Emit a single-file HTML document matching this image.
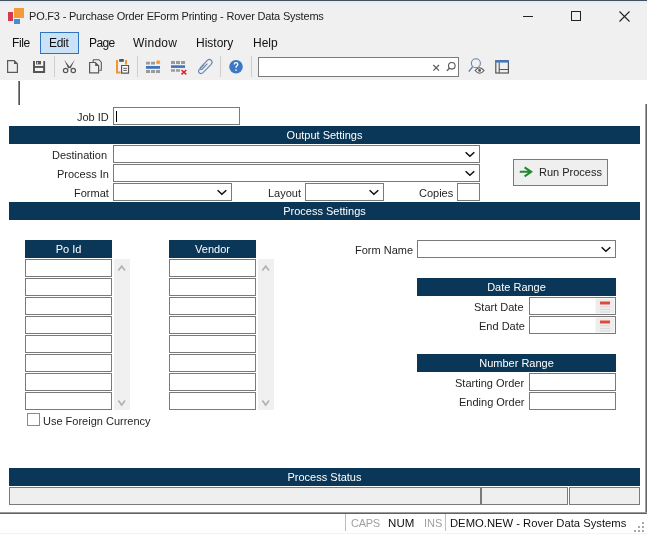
<!DOCTYPE html>
<html><head><meta charset="utf-8">
<style>
*{margin:0;padding:0;box-sizing:border-box}
html,body{width:647px;height:534px;overflow:hidden;background:#fff;font-family:"Liberation Sans",sans-serif;position:relative;-webkit-font-smoothing:antialiased}
.a{position:absolute}
.t{position:absolute;white-space:nowrap;line-height:1;will-change:transform}
#chrome{left:0;top:0;width:647px;height:80px;background:#f0f0f0}
.menu{font-size:12px;color:#111;top:37px}
.lbl{font-size:11px;color:#1f1f1f;text-align:right}
.band{background:#0a3657;color:#fff;font-size:11px;text-align:center;line-height:18px;height:18px;will-change:transform}
.box{border:1px solid #7a7a7a;background:#fff}
.sep{width:1px;background:#c8c8c8}
.chev{position:absolute;width:6px;height:6px;border-right:1.6px solid #222;border-bottom:1.6px solid #222;transform:rotate(45deg)}
.sb{background:#f0f0f0}
.sbch{position:absolute;width:5px;height:5px;border-left:1.3px solid #a8a8a8;border-top:1.3px solid #a8a8a8}
</style></head><body>
<div id="chrome" class="a"></div>
<!-- title bar -->
<div class="a" style="left:0;top:0;width:647px;height:1px;background:#44505e"></div>
<div class="a" style="left:0;top:1px;width:647px;height:2px;background:#e6ecf3"></div>
<div class="a" style="left:8px;top:12px;width:5px;height:9px;background:#d33b4c"></div>
<div class="a" style="left:14px;top:8px;width:10px;height:10px;background:#f39a3b"></div>
<div class="a" style="left:14px;top:19px;width:6px;height:5px;background:#4a8ad8"></div>
<div class="t" style="left:29px;top:11px;font-size:11px;color:#222;letter-spacing:-0.2px">PO.F3 - Purchase Order EForm Printing - Rover Data Systems</div>
<div class="a" style="left:523px;top:16px;width:10px;height:1px;background:#222"></div>
<div class="a" style="left:571px;top:11px;width:10px;height:10px;border:1px solid #222"></div>
<svg class="a" style="left:618px;top:10px" width="13" height="13" viewBox="0 0 13 13"><path d="M1.5 1.5L11.5 11.5M11.5 1.5L1.5 11.5" stroke="#222" stroke-width="1.1"/></svg>

<!-- menu -->
<div class="a" style="left:40px;top:32px;width:39px;height:22px;background:#c9e2f8;border:1px solid #2f74bf"></div>
<div class="t menu" style="left:12px;letter-spacing:-0.4px">File</div>
<div class="t menu" style="left:49px;letter-spacing:-0.3px">Edit</div>
<div class="t menu" style="left:89px;letter-spacing:-0.6px">Page</div>
<div class="t menu" style="left:133px;letter-spacing:0.25px">Window</div>
<div class="t menu" style="left:196px">History</div>
<div class="t menu" style="left:253px">Help</div>

<!-- toolbar -->
<svg class="a" style="left:0;top:0" width="647" height="80" viewBox="0 0 647 80">
<g fill="none" stroke-linejoin="miter">
<!-- new doc -->
<path d="M7.6 60.6H14.2L17.4 63.8V72.4H7.6Z" stroke="#5a5a5a" stroke-width="1.2"/>
<path d="M14 60.5V64H17.5Z" fill="#5a5a5a" stroke="none"/>
<!-- save -->
<path d="M33 61H45.1V73H33Z" fill="#555" stroke="none"/>
<path d="M35 61H43.3V66H35Z" fill="#f4f4f4" stroke="none"/>
<path d="M36 61H41V64.4H36Z" fill="#555" stroke="none"/>
<path d="M36.9 62.2H38.1V63.7H36.9Z" fill="#f4f4f4" stroke="none"/>
<path d="M35 67.9H43.1V71H35Z" fill="#f4f4f4" stroke="none"/>
<!-- sep -->
<path d="M54.5 56V77" stroke="#cfcfcf" stroke-width="1"/>
<!-- scissors -->
<path d="M64.2 59.8L70.2 67.4L68.2 68.6Z" fill="#555" stroke="none"/>
<path d="M74.8 59.8L69 67.4L70.6 68.4Z" fill="#555" stroke="none"/>
<circle cx="65.6" cy="70.5" r="2.2" stroke="#555" stroke-width="1.2"/>
<circle cx="73.3" cy="70.5" r="2.2" stroke="#555" stroke-width="1.2"/>
<!-- copy -->
<path d="M93.2 59.7H98.8L101.3 62.2V70.2H99.2" stroke="#5a5a5a" stroke-width="1.1"/>
<path d="M93.2 59.7V62" stroke="#5a5a5a" stroke-width="1.1"/>
<path d="M89.6 62.5H95.4L98.6 65.7V72.9H89.6Z" stroke="#5a5a5a" stroke-width="1.2"/>
<path d="M95.2 62.4V65.9H98.7Z" fill="#5a5a5a" stroke="none"/>
<!-- paste -->
<path d="M117 60V72.5H120.6" stroke="#ef9536" stroke-width="2"/>
<path d="M126 60V64.5" stroke="#ef9536" stroke-width="2"/>
<path d="M119.2 59H123.8V61.8H119.2Z" fill="#555" stroke="none"/>
<path d="M121.6 65.5H128.5V73.1H121.6Z" fill="#fff" stroke="#555" stroke-width="1.2"/>
<path d="M123.3 68.3H126.9M123.3 70.4H126.9" stroke="#555" stroke-width="1"/>
<!-- sep -->
<path d="M137.5 56V77" stroke="#cfcfcf" stroke-width="1"/>
<!-- insert row -->
<path d="M146 61.8H150V64.5H146ZM151 61.8H155V64.5H151Z" fill="#9a9a9a" stroke="none"/>
<circle cx="158.2" cy="62.2" r="2" fill="#f29a3a" stroke="none"/>
<path d="M146 66H160V68.8H146Z" fill="#3d75bd" stroke="none"/>
<path d="M146 70H150V73H146ZM151 70H155V73H151ZM156 70H160V73H156Z" fill="#9a9a9a" stroke="none"/>
<!-- delete row -->
<path d="M171 61.1H175V63.9H171ZM176 61.1H180V63.9H176ZM181 61.1H185V63.9H181Z" fill="#9a9a9a" stroke="none"/>
<path d="M171 65.3H185V67.9H171Z" fill="#3d75bd" stroke="none"/>
<path d="M171 69.2H175V71.8H171ZM176 69.2H180V71.8H176Z" fill="#9a9a9a" stroke="none"/>
<path d="M181.5 70L186.3 74.3M186.3 70L181.5 74.3" stroke="#d9262f" stroke-width="1.6"/>
<!-- paperclip -->
<path d="M204.2 64.3L199.3 69.4Q197.6 71.5 199.5 73Q201.3 74.2 203 72.6L210.9 64.6Q213.2 62 211.2 60.2Q209.2 58.6 207.1 60.6L200.6 67.4Q199.7 68.6 200.5 69.3Q201.3 70 202.3 69L207.4 63.7" stroke="#6b86ad" stroke-width="1.2"/>
<!-- sep -->
<path d="M220.5 56V77" stroke="#cfcfcf" stroke-width="1"/>
<!-- help -->
<circle cx="236" cy="66.7" r="6.8" fill="#3b78c3" stroke="none"/>
<path d="M234.2 64.4Q234.2 62.6 236 62.6Q237.8 62.6 237.8 64.3Q237.8 65.3 236.8 65.9Q236 66.4 236 67.8" stroke="#fff" stroke-width="1.3"/>
<circle cx="236" cy="70" r="0.85" fill="#fff" stroke="none"/>
<!-- sep -->
<path d="M251.5 56V77" stroke="#cfcfcf" stroke-width="1"/>
<!-- search box -->
<rect x="258.5" y="57.5" width="200" height="19" fill="#fff" stroke="#7a7a7a" stroke-width="1"/>
<path d="M433.3 65L439 70.6M439 65L433.3 70.6" stroke="#555" stroke-width="1.1"/>
<circle cx="451.8" cy="65.8" r="3.3" stroke="#555" stroke-width="1.1"/>
<path d="M449.4 68.3L446.8 70.9" stroke="#555" stroke-width="1.3"/>
<!-- preview -->
<circle cx="475.9" cy="63.3" r="4.5" stroke="#6384b0" stroke-width="1.1"/>
<path d="M472.7 66.6L468.8 71.6" stroke="#6384b0" stroke-width="1.5"/>
<path d="M475.1 70.5Q479.6 65 484.1 70.5Q479.6 76 475.1 70.5Z" fill="#f0f0f0" stroke="#555" stroke-width="1.1"/>
<circle cx="479.6" cy="70.4" r="1.4" fill="#555" stroke="none"/>
<!-- layout -->
<rect x="495.8" y="60.8" width="12.6" height="12.2" stroke="#555" stroke-width="1.2"/>
<path d="M495.2 60.2H509V62.6H495.2Z" fill="#3f78c0" stroke="none"/>
<path d="M499.2 62.5V73M499.2 69.5H508.4" stroke="#555" stroke-width="1.1"/>
</g>
</svg>

<!-- content -->
<div class="a" style="left:18px;top:81px;width:1px;height:24px;background:#8a8a8a"></div><div class="a" style="left:19px;top:81px;width:1px;height:24px;background:#555"></div>
<div class="a" style="left:645px;top:104px;width:1px;height:409px;background:#a2a2a2"></div><div class="a" style="left:646px;top:104px;width:1px;height:409px;background:#646464"></div>

<div class="t lbl" style="left:77px;top:112px">Job ID</div>
<div class="a box" style="left:113px;top:107px;width:127px;height:18px"></div>
<div class="a" style="left:116px;top:111px;width:1px;height:11px;background:#000"></div>

<div class="a band" style="left:9px;top:126px;width:631px">Output Settings</div>

<div class="t lbl" style="left:52px;top:150px">Destination</div>
<div class="a box" style="left:113px;top:145px;width:367px;height:18px"></div>
<div class="t lbl" style="left:57px;top:169px">Process In</div>
<div class="a box" style="left:113px;top:164px;width:367px;height:18px"></div>
<div class="t lbl" style="left:74px;top:188px">Format</div>
<div class="a box" style="left:113px;top:183px;width:119px;height:18px"></div>
<div class="t lbl" style="left:268px;top:188px">Layout</div>
<div class="a box" style="left:305px;top:183px;width:79px;height:18px"></div>
<div class="t lbl" style="left:419px;top:188px">Copies</div>
<div class="a box" style="left:457px;top:183px;width:23px;height:18px"></div>

<div class="a" style="left:513px;top:159px;width:95px;height:27px;background:#efefef;border:1px solid #7a7a7a"></div>
<div class="t" style="left:539px;top:167px;font-size:11px;color:#222">Run Process</div>

<div class="a band" style="left:9px;top:202px;width:631px">Process Settings</div>

<div class="a band" style="left:25px;top:240px;width:87px">Po Id</div>
<div class="a band" style="left:169px;top:240px;width:87px">Vendor</div>
<div class="a box" style="left:25px;top:259px;width:87px;height:18px"></div>
<div class="a box" style="left:25px;top:278px;width:87px;height:18px"></div>
<div class="a box" style="left:25px;top:297px;width:87px;height:18px"></div>
<div class="a box" style="left:25px;top:316px;width:87px;height:18px"></div>
<div class="a box" style="left:25px;top:335px;width:87px;height:18px"></div>
<div class="a box" style="left:25px;top:354px;width:87px;height:18px"></div>
<div class="a box" style="left:25px;top:373px;width:87px;height:18px"></div>
<div class="a box" style="left:25px;top:392px;width:87px;height:18px"></div>
<div class="a sb" style="left:114px;top:259px;width:16px;height:151px"></div>
<div class="a box" style="left:169px;top:259px;width:87px;height:18px"></div>
<div class="a box" style="left:169px;top:278px;width:87px;height:18px"></div>
<div class="a box" style="left:169px;top:297px;width:87px;height:18px"></div>
<div class="a box" style="left:169px;top:316px;width:87px;height:18px"></div>
<div class="a box" style="left:169px;top:335px;width:87px;height:18px"></div>
<div class="a box" style="left:169px;top:354px;width:87px;height:18px"></div>
<div class="a box" style="left:169px;top:373px;width:87px;height:18px"></div>
<div class="a box" style="left:169px;top:392px;width:87px;height:18px"></div>
<div class="a sb" style="left:258px;top:259px;width:16px;height:151px"></div>

<div class="t lbl" style="left:355px;top:245px">Form Name</div>
<div class="a box" style="left:417px;top:240px;width:199px;height:18px"></div>

<div class="a band" style="left:417px;top:278px;width:199px">Date Range</div>
<div class="t lbl" style="left:474px;top:302px">Start Date</div>
<div class="a box" style="left:529px;top:297px;width:87px;height:18px"></div>
<div class="t lbl" style="left:479px;top:321px">End Date</div>
<div class="a box" style="left:529px;top:316px;width:87px;height:18px"></div>

<div class="a band" style="left:417px;top:354px;width:199px">Number Range</div>
<div class="t lbl" style="left:455px;top:378px">Starting Order</div>
<div class="a box" style="left:529px;top:373px;width:87px;height:18px"></div>
<div class="t lbl" style="left:459px;top:397px">Ending Order</div>
<div class="a box" style="left:529px;top:392px;width:87px;height:18px"></div>

<div class="a" style="left:27px;top:413px;width:13px;height:13px;border:1px solid #8a8a8a;background:#fff"></div>
<div class="t lbl" style="left:43px;top:416px">Use Foreign Currency</div>

<div class="a band" style="left:9px;top:468px;width:631px">Process Status</div>
<div class="a" style="left:9px;top:487px;width:472px;height:18px;background:#efefef;border:1px solid #7a7a7a"></div>
<div class="a" style="left:481px;top:487px;width:87px;height:18px;background:#efefef;border:1px solid #7a7a7a"></div>
<div class="a" style="left:569px;top:487px;width:71px;height:18px;background:#efefef;border:1px solid #7a7a7a"></div>

<svg class="a" style="left:465px;top:151px" width="10" height="7" viewBox="0 0 10 7"><path d="M0.6 1.2L4.9 5.3L9.3 1.2" fill="none" stroke="#111" stroke-width="1.5"/></svg>
<svg class="a" style="left:465px;top:170px" width="10" height="7" viewBox="0 0 10 7"><path d="M0.6 1.2L4.9 5.3L9.3 1.2" fill="none" stroke="#111" stroke-width="1.5"/></svg>
<svg class="a" style="left:217px;top:189px" width="10" height="7" viewBox="0 0 10 7"><path d="M0.6 1.2L4.9 5.3L9.3 1.2" fill="none" stroke="#111" stroke-width="1.5"/></svg>
<svg class="a" style="left:369px;top:189px" width="10" height="7" viewBox="0 0 10 7"><path d="M0.6 1.2L4.9 5.3L9.3 1.2" fill="none" stroke="#111" stroke-width="1.5"/></svg>
<svg class="a" style="left:601px;top:246px" width="10" height="7" viewBox="0 0 10 7"><path d="M0.6 1.2L4.9 5.3L9.3 1.2" fill="none" stroke="#111" stroke-width="1.5"/></svg>
<svg class="a" style="left:518px;top:166px" width="16" height="12" viewBox="0 0 16 12"><path d="M1.8 5.8H13.2M6.6 1.3L13.2 5.8L6.6 10.3" fill="none" stroke="#1f8a2e" stroke-width="2"/></svg>
<svg class="a" style="left:114px;top:263px" width="16" height="10" viewBox="0 0 16 10"><path d="M4.4 7.6L7.7 3.2L11 7.6" fill="none" stroke="#b2b2b2" stroke-width="1.7"/></svg>
<svg class="a" style="left:114px;top:398px" width="16" height="10" viewBox="0 0 16 10"><path d="M4.4 2.6L7.7 7L11 2.6" fill="none" stroke="#b2b2b2" stroke-width="1.7"/></svg>
<svg class="a" style="left:258px;top:263px" width="16" height="10" viewBox="0 0 16 10"><path d="M4.4 7.6L7.7 3.2L11 7.6" fill="none" stroke="#b2b2b2" stroke-width="1.7"/></svg>
<svg class="a" style="left:258px;top:398px" width="16" height="10" viewBox="0 0 16 10"><path d="M4.4 2.6L7.7 7L11 2.6" fill="none" stroke="#b2b2b2" stroke-width="1.7"/></svg>
<svg class="a" style="left:595px;top:298px" width="20" height="16" viewBox="0 0 20 16"><rect x="0.5" y="0.5" width="19" height="15" fill="#ededed"/><path d="M5 3.5H15V6.5H5Z" fill="#e0483a"/><path d="M5 8.6H15M5 11.4H15M5 14H15" stroke="#d8d8d8" stroke-width="1"/></svg>
<svg class="a" style="left:595px;top:317px" width="20" height="16" viewBox="0 0 20 16"><rect x="0.5" y="0.5" width="19" height="15" fill="#ededed"/><path d="M5 3.5H15V6.5H5Z" fill="#e0483a"/><path d="M5 8.6H15M5 11.4H15M5 14H15" stroke="#d8d8d8" stroke-width="1"/></svg>
<!-- status bar -->
<div class="a" style="left:0;top:512px;width:647px;height:1px;background:#9a9a9a"></div><div class="a" style="left:0;top:513px;width:647px;height:1px;background:#626262"></div><div class="a" style="left:0;top:533px;width:647px;height:1px;background:#f3f3f3"></div>
<div class="a" style="left:345px;top:514px;width:1px;height:17px;background:#bdbdbd"></div>
<div class="a" style="left:445px;top:514px;width:1px;height:17px;background:#bdbdbd"></div>
<div class="t" style="left:351px;top:518px;font-size:11px;color:#a0a0a0;letter-spacing:-0.3px">CAPS</div>
<div class="t" style="left:388px;top:518px;font-size:11.5px;color:#111;letter-spacing:0.1px">NUM</div>
<div class="t" style="left:424px;top:518px;font-size:11px;color:#a0a0a0">INS</div>
<div class="t" style="left:450px;top:518px;font-size:11.25px;color:#111">DEMO.NEW - Rover Data Systems</div>
<svg class="a" style="left:632px;top:520px" width="14" height="13" viewBox="0 0 14 13"><path d="M10 2h2v2h-2zM6 6h2v2H6zM10 6h2v2h-2zM2 10h2v2H2zM6 10h2v2H6zM10 10h2v2h-2z" fill="#a8a8a8"/></svg>
</body></html>
